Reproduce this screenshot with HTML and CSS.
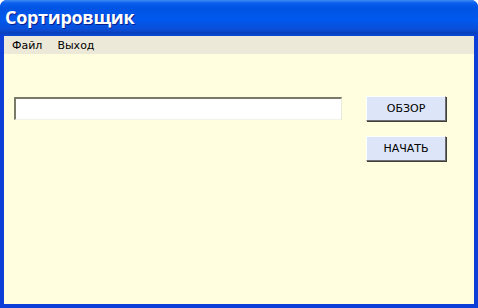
FILE: index.html
```html
<!DOCTYPE html>
<html lang="ru">
<head>
  <meta charset="UTF-8">
  <title>Сортировщик</title>
  <link rel="stylesheet" href="styles.css">
</head>
<body>
  <div class="window">
    <div class="titlebar">Сортировщик</div>
    <div class="frame">
      <div class="menubar">
        <span class="menu-item">Файл</span>
        <span class="menu-item">Выход</span>
      </div>
      <div class="client">
        <div class="row">
          <input class="path" type="text">
          <button class="btn">ОБЗОР</button>
        </div>
        <div class="row end">
          <button class="btn">НАЧАТЬ</button>
        </div>
      </div>
    </div>
  </div>
</body>
</html>
```

FILE: styles.css
```css
body {
  margin: 0;
  width: 478px;
  height: 308px;
  overflow: hidden;
  background: #fff;
  font-family: "DejaVu Sans", sans-serif;
}

.window {
  width: 478px;
  height: 308px;
  display: flex;
  flex-direction: column;
  background: #0b3fd8;
  border-radius: 7px 7px 0 0;
  overflow: hidden;
}

.titlebar {
  height: 34px;
  flex: none;
  box-sizing: border-box;
  padding: 5px 0 0 5px;
  color: #fff;
  font-family: "Open Sans", sans-serif;
  font-weight: bold;
  font-size: 18px;
  line-height: 24px;
  letter-spacing: -0.3px;
  text-shadow: 1px 1px 0 #0a1f8c;
  background: linear-gradient(to bottom, #3f8cf3 0px, #0a5fef 3px, #0054e3 8px, #0058ee 20px, #0a4fd8 29px, #0a3fb8 34px);
}

.frame {
  flex: 1;
  display: flex;
  flex-direction: column;
  margin: 0 4px 4px 4px;
  border-top: 2px solid #0a47d0;
}

.menubar {
  height: 18px;
  flex: none;
  display: flex;
  align-items: center;
  padding-left: 8px;
  background: #ece9d8;
  font-size: 11px;
  color: #000;
}

.menu-item {
  margin-right: 15px;
}

.client {
  flex: 1;
  background: #ffffe0;
  padding: 42px 28px 0 10px;
}

.row {
  display: flex;
  align-items: center;
  justify-content: space-between;
  margin-bottom: 15px;
}

.row.end {
  justify-content: flex-end;
}

.path {
  width: 328px;
  height: 23px;
  box-sizing: border-box;
  margin: 0;
  background: #fff;
  border: 2px solid;
  border-color: #7a7a6b #e8e8dc #f2f2e8 #7a7a6b;
  border-width: 2px 1px 1px 2px;
}

.btn {
  width: 80px;
  height: 25px;
  margin: 0;
  padding: 0;
  font-family: "DejaVu Sans", sans-serif;
  font-size: 11px;
  color: #000;
  background: #dce6f8;
  border: 1px solid;
  border-color: #fff #6f6f6f #6f6f6f #fff;
  box-shadow: 1px 1px 0 #3f3f3f;
}
```
